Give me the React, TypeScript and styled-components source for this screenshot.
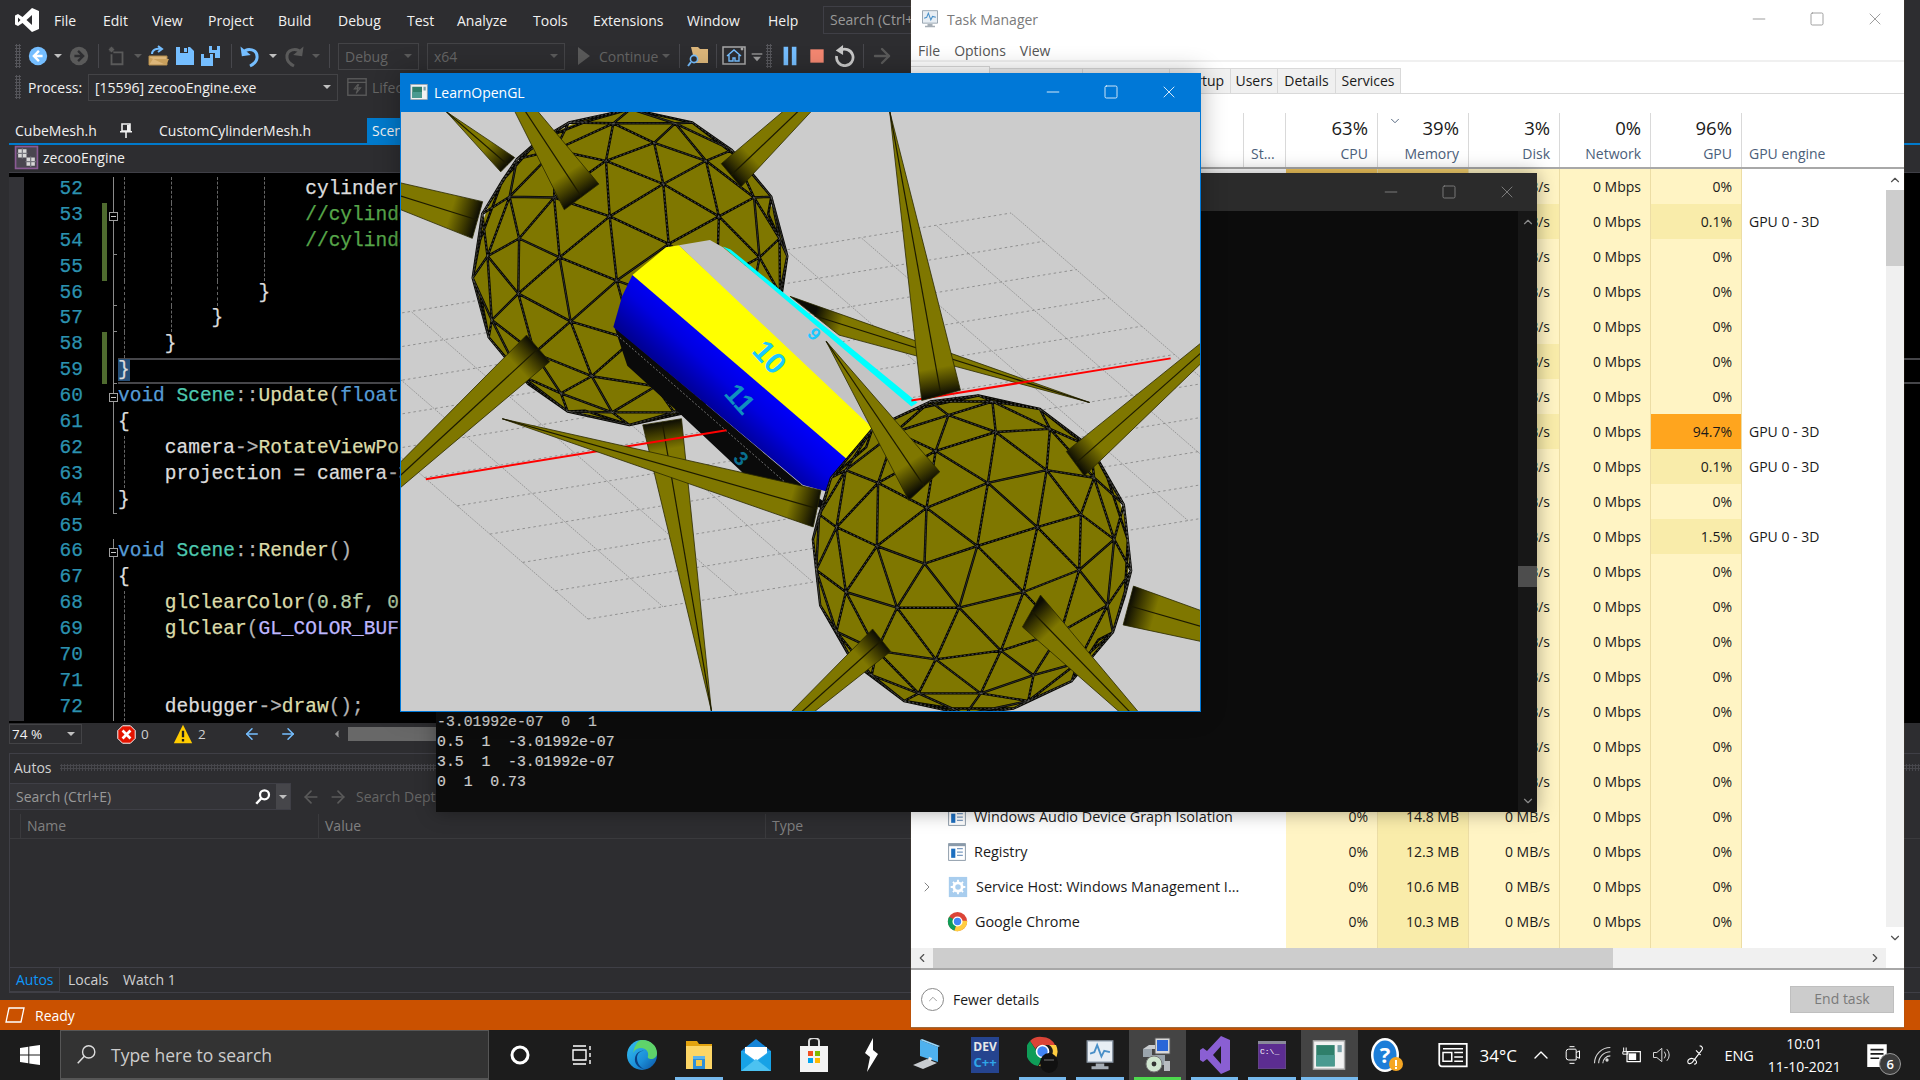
import React, { useId } from 'react'
import styled, { createGlobalStyle } from 'styled-components'
import { ChevronUp, ChevronDown, ChevronLeft, ChevronRight, ArrowLeft, ArrowRight, Minus, Square, X } from 'lucide-react'

const UI_FONT = '"Open Sans", "Noto Sans", sans-serif'
const CODE_FONT = '"Liberation Mono", "DejaVu Sans Mono", monospace'

const GlobalStyle = createGlobalStyle`
  html, body {
    margin: 0;
    padding: 0;
    background: #1c1c1c;
  }
  * {
    box-sizing: border-box;
  }
`

const Desktop = styled.div`
  width: 1920px;
  height: 1080px;
  display: flex;
  flex-direction: column;
  overflow: hidden;
  font-family: ${UI_FONT};
  font-size: 14px;
`

const WorkArea = styled.div`
  position: relative;
  height: 1030px;
  flex: none;
`

/* ---------- Visual Studio ---------- */

const VsWindow = styled.div`
  position: absolute;
  inset: 0;
  background: #2d2d30;
  color: #f1f1f1;
  display: flex;
  flex-direction: column;
  overflow: hidden;
`

const MenuBar = styled.div`
  height: 40px;
  flex: none;
  display: flex;
  align-items: center;
  padding-left: 15px;
`

const VsLogo = styled.svg`
  width: 24px;
  height: 24px;
  flex: none;
  margin-right: 15px;
`

const MenuItem = styled.span<{ $w: number }>`
  width: ${({ $w }) => $w}px;
  flex: none;
  color: #f1f1f1;
`

const QuickSearch = styled.div`
  flex: none;
  height: 28px;
  width: 200px;
  margin-left: 18px;
  border: 1px solid #3f3f46;
  padding: 3px 6px;
  color: #999999;
  white-space: nowrap;
`

const Toolbar = styled.div`
  height: 32px;
  flex: none;
  display: flex;
  align-items: center;
  padding-left: 15px;
`

const ProcessBar = styled(Toolbar)`
  height: 30px;
`

const Grip = styled.div`
  width: 6px;
  height: 24px;
  flex: none;
  background-image: radial-gradient(#55555a 1px, transparent 1.2px);
  background-size: 3px 3px;
`

const Slot = styled.div<{ $w: number }>`
  width: ${({ $w }) => $w}px;
  height: 100%;
  flex: none;
  display: flex;
  align-items: center;
  justify-content: center;
`

const ToolSep = styled(Slot)`
  &::before {
    content: '';
    width: 1px;
    height: 24px;
    background: #47474c;
  }
`

const Combo = styled.div<{ $w: number; $dim?: boolean }>`
  width: ${({ $w }) => $w}px;
  height: 27px;
  flex: none;
  display: flex;
  align-items: center;
  justify-content: space-between;
  padding: 0 6px;
  border: 1px solid #434346;
  color: ${({ $dim }) => ($dim ? '#656565' : '#f1f1f1')};
`

const Caret = styled.i<{ $dim?: boolean }>`
  width: 0;
  height: 0;
  flex: none;
  border-left: 4px solid transparent;
  border-right: 4px solid transparent;
  border-top: 4px solid ${({ $dim }) => ($dim ? '#5a5a5a' : '#c0c0c0')};
`

const DimText = styled.span`
  color: #656565;
  white-space: nowrap;
`

const ProcessLabel = styled.span`
  width: 60px;
  margin-left: 7px;
  flex: none;
  color: #f1f1f1;
`

const TabRow = styled.div`
  height: 41px;
  flex: none;
  display: flex;
  align-items: flex-end;
  padding-left: 15px;
`

const DocTab = styled.div<{ $w: number; $active?: boolean }>`
  width: ${({ $w }) => $w}px;
  height: 25px;
  flex: none;
  display: flex;
  align-items: center;
  gap: 22px;
  white-space: nowrap;
  ${({ $active }) => $active && 'background: #007acc; padding-left: 5px;'}
`

const ContentColumn = styled.div`
  flex: 1;
  min-height: 0;
  margin-left: 9px;
  display: flex;
  flex-direction: column;
  border-top: 2px solid #007acc;
`

const NavBar = styled.div`
  height: 28px;
  flex: none;
  display: flex;
  align-items: center;
  gap: 4px;
  padding: 0 0 2px 5px;
  border-bottom: 1px solid #3f3f46;
`

const Editor = styled.div`
  height: 550px;
  flex: none;
  padding-top: 4px;
  background: #000000;
  overflow: hidden;
  font-family: ${CODE_FONT};
  font-size: 19.5px;
  -webkit-text-stroke: 0.25px;
  display: flex;
  flex-direction: column;
`

const CodeRow = styled.div`
  position: relative;
  height: 25.9px;
  flex: none;
  display: flex;
  align-items: stretch;
`

const Strip = styled.div`
  width: 15px;
  flex: none;
  background: #333337;
`

const LineNumber = styled.div`
  width: 59px;
  flex: none;
  color: #2b91af;
  text-align: right;
  line-height: 25.9px;
`

const ChangeBar = styled.div<{ $on?: boolean }>`
  width: 5px;
  margin-left: 19px;
  flex: none;
  background: ${({ $on }) => ($on ? '#4f6b2f' : 'transparent')};
`

const FoldCell = styled.div<{ $kind: string }>`
  position: relative;
  width: 11px;
  flex: none;
  &::before {
    content: '';
    display: ${({ $kind }) => ($kind === 'none' ? 'none' : 'block')};
    position: absolute;
    left: 6px;
    top: 0;
    bottom: 0;
    width: 1px;
    background: #8a8a8a;
  }
  &::after {
    content: '';
    display: ${({ $kind }) => ($kind === 'end' ? 'block' : 'none')};
    position: absolute;
    left: 6px;
    bottom: 0;
    width: 4px;
    height: 1px;
    background: #8a8a8a;
  }
`

const FoldBox = styled.span`
  position: absolute;
  left: 2px;
  top: 9px;
  width: 9px;
  height: 9px;
  background: #000000;
  border: 1px solid #a0a0a0;
  &::after {
    content: '';
    position: absolute;
    left: 1px;
    right: 1px;
    top: 3px;
    height: 1px;
    background: #c8c8c8;
  }
`

const CodeText = styled.div<{ $current?: boolean }>`
  flex: 1;
  white-space: pre;
  line-height: 25.9px;
  overflow: hidden;
  ${({ $current }) => $current && 'box-shadow: inset 0 2px 0 #46464a, inset 0 -2px 0 #46464a;'}
`

const Token = styled.span<{ $c: string; $sel?: boolean }>`
  color: ${({ $c }) => $c};
  ${({ $sel }) => $sel && 'background: #264f78;'}
`

const Guide = styled.i`
  position: absolute;
  top: 0;
  bottom: 0;
  width: 0;
  border-left: 1px dashed #666666;
`

const EditorStatus = styled.div`
  height: 22px;
  flex: none;
  display: flex;
  align-items: center;
  font-size: 13.5px;
`

const ZoomCombo = styled(Combo)`
  height: 20px;
  padding: 0 6px 0 2px;
  width: 73px;
`

const StatusCount = styled.span`
  color: #d0d0d0;
  margin-left: 5px;
  width: 20px;
`

const HScrollThumb = styled.div`
  flex: none;
  width: 400px;
  height: 14px;
  background: #686868;
`

const AutosPanel = styled.div`
  height: 240px;
  margin-top: 8px;
  flex: none;
  border: 1px solid #3f3f46;
  border-right: none;
  display: flex;
  flex-direction: column;
`

const PanelTitle = styled.div`
  height: 29px;
  flex: none;
  display: flex;
  align-items: center;
  gap: 8px;
  padding: 0 0 2px 4px;
  color: #d0d0d0;
`

const GripBar = styled.div`
  flex: 1;
  height: 7px;
  background-image: radial-gradient(#47474c 1px, transparent 1.2px);
  background-size: 3px 3px;
`

const SearchRow = styled.div`
  height: 27px;
  flex: none;
  display: flex;
  align-items: center;
`

const WatchSearch = styled.div`
  width: 281px;
  height: 100%;
  flex: none;
  display: flex;
  align-items: center;
  background: #333337;
  color: #999999;
  padding-left: 6px;
  border: 1px solid #3f3f46;
  border-left: none;
`

const WatchSearchText = styled.span`
  flex: 1;
`

const DropZone = styled.div`
  width: 14px;
  align-self: stretch;
  flex: none;
  display: flex;
  align-items: center;
  justify-content: center;
  background: #46464a;
`

const ColumnHeader = styled.div`
  height: 25px;
  margin-top: 4px;
  flex: none;
  display: grid;
  grid-template-columns: 10px 298px 447px 1fr;
  color: #808080;
  border-bottom: 1px solid #3a3a3d;
`

const ColumnCell = styled.div`
  padding-left: 6px;
  border-left: 1px solid #3a3a3d;
  line-height: 24px;
`

const WatchArea = styled.div`
  flex: 1;
`

const BottomTabs = styled.div`
  height: 25px;
  flex: none;
  display: flex;
  align-items: stretch;
  border-top: 1px solid #3f3f46;
`

const BottomTab = styled.div<{ $w: number; $active?: boolean }>`
  width: ${({ $w }) => $w}px;
  flex: none;
  padding-left: ${({ $active }) => ($active ? '6px' : '7px')};
  line-height: 24px;
  color: ${({ $active }) => ($active ? '#0e97f8' : '#d0d0d0')};
  ${({ $active }) => $active && 'border-right: 1px solid #3f3f46; border-bottom: 1px solid #3f3f46; margin-right: 1px;'}
`

const VsStatusBar = styled.div`
  height: 30px;
  margin-top: 7px;
  flex: none;
  background: #ca5100;
  color: #ffffff;
  display: flex;
  align-items: center;
  gap: 10px;
  padding-left: 5px;
`

/* ---------- Task Manager ---------- */

const TaskManagerWindow = styled.div`
  position: absolute;
  left: 911px;
  top: 0;
  width: 993px;
  height: 1028px;
  background: #ffffff;
  color: #1a1a1a;
  display: flex;
  flex-direction: column;
  box-shadow: 0 0 1px #7a5a3a;
  border-bottom: 1px solid #a06a3a;
`

const TitleBar = styled.div`
  height: 40px;
  flex: none;
  display: flex;
  align-items: center;
  gap: 7px;
  padding: 0 0 2px 9px;
  color: #7a7a7a;
`

const TitleText = styled.span`
  flex: 1;
`

const CaptionButtons = styled.div<{ $color: string }>`
  display: flex;
  flex: none;
  align-items: center;
  color: ${({ $color }) => $color};
`

const CaptionButton = styled.div<{ $w: number }>`
  width: ${({ $w }) => $w}px;
  height: 30px;
  flex: none;
  display: flex;
  align-items: center;
  justify-content: center;
`

const TmMenu = styled.div`
  height: 22px;
  flex: none;
  display: flex;
  align-items: center;
  gap: 14px;
  padding-left: 7px;
  color: #555555;
  border-bottom: 2px solid #f0f0f0;
`

const TmTabs = styled.div`
  height: 32px;
  flex: none;
  display: flex;
  align-items: flex-end;
  border-bottom: 1px solid #d9d9d9;
`

const TmTab = styled.div<{ $w: number; $active?: boolean }>`
  width: ${({ $w }) => $w}px;
  height: ${({ $active }) => ($active ? '27px' : '25px')};
  flex: none;
  background: ${({ $active }) => ($active ? '#ffffff' : '#f0f0f0')};
  border: 1px solid #d9d9d9;
  border-left: none;
  border-bottom: none;
  text-align: center;
  line-height: 23px;
`

const HeaderRow = styled.div`
  height: 56px;
  margin-top: 19px;
  flex: none;
  display: grid;
  grid-template-columns: 333px 42px 92px 91px 91px 91px 91px 1fr;
  border-bottom: 2px solid #a8a8a8;
`

const HeaderCell = styled.div<{ $align?: string }>`
  position: relative;
  border-right: 1px solid #d9d9d9;
  display: flex;
  flex-direction: column;
  justify-content: flex-end;
  align-items: ${({ $align }) => $align || 'flex-end'};
  padding: 0 9px 4px 7px;
  color: #4c607a;
`

const LastHeaderCell = styled(HeaderCell)`
  border-right: none;
`

const BigPercent = styled.span`
  font-size: 18.5px;
  color: #1a1a1a;
  line-height: 28px;
  margin-bottom: 2px;
`

const SortMark = styled.span`
  position: absolute;
  left: 10px;
  top: 1px;
  color: #4c607a;
  display: flex;
`

const TableArea = styled.div`
  height: 779px;
  flex: none;
  display: flex;
`

const Rows = styled.div`
  flex: 1;
  overflow: hidden;
`

const ProcessRow = styled.div`
  height: 35px;
  display: grid;
  grid-template-columns: 333px 42px 92px 91px 91px 91px 91px 1fr;
`

const NameCell = styled.div`
  display: flex;
  align-items: center;
  padding-left: 8px;
  white-space: nowrap;
  overflow: hidden;
`

const Expander = styled.div`
  width: 16px;
  flex: none;
  color: #7a7a7a;
  display: flex;
  margin-right: 12px;
`

const ProcessName = styled.span`
  margin-left: 7px;
  font-size: 14.4px;
`

const EmptyCell = styled.div``

const HeatCell = styled.div<{ $bg: string }>`
  background: ${({ $bg }) => $bg};
  border-right: 1px solid #ecdda5;
  display: flex;
  align-items: center;
  justify-content: flex-end;
  padding-right: 9px;
  white-space: nowrap;
`

const EngineCell = styled.div`
  display: flex;
  align-items: center;
  padding-left: 7px;
`

const VScroll = styled.div`
  width: 18px;
  flex: none;
  background: #f0f0f0;
  display: flex;
  flex-direction: column;
  align-items: center;
  justify-content: space-between;
  position: relative;
  color: #505050;
`

const ArrowBox = styled.div`
  height: 21px;
  width: 100%;
  background: #ffffff;
  display: flex;
  align-items: center;
  justify-content: center;
  flex: none;
`

const VThumb = styled.div`
  position: absolute;
  left: 0;
  right: 0;
  top: 21px;
  height: 76px;
  background: #cdcdcd;
`

const HScroll = styled.div`
  height: 20px;
  flex: none;
  display: flex;
  align-items: center;
  background: #f0f0f0;
  margin-right: 18px;
  color: #505050;
`

const HThumb = styled.div`
  width: 680px;
  height: 100%;
  flex: none;
  background: #cdcdcd;
`

const HTrack = styled.div`
  flex: 1;
`

const TmFooter = styled.div`
  flex: 1;
  display: flex;
  align-items: center;
  justify-content: space-between;
  padding: 1px 10px 0 10px;
  border-top: 2px solid #a8a8a8;
`

const FewerDetails = styled.div`
  display: flex;
  align-items: center;
  gap: 9px;
`

const FewerCircle = styled.div`
  width: 23px;
  height: 23px;
  border: 1px solid #8a8a8a;
  border-radius: 50%;
  color: #8a8a8a;
  display: flex;
  align-items: center;
  justify-content: center;
`

const EndTask = styled.div`
  width: 104px;
  height: 27px;
  background: #cccccc;
  border: 1px solid #bfbfbf;
  color: #7a7a7a;
  text-align: center;
  line-height: 24px;
`

/* ---------- Console ---------- */

const ConsoleWindow = styled.div`
  position: absolute;
  left: 436px;
  top: 173px;
  width: 1101px;
  height: 639px;
  display: flex;
  flex-direction: column;
  background: #0c0c0c;
  box-shadow: 0 0 18px rgba(0, 0, 0, 0.35);
`

const ConsoleTitle = styled.div`
  height: 38px;
  flex: none;
  background: #2b2b2b;
  display: flex;
  justify-content: flex-end;
  align-items: center;
  padding-right: 1px;
`

const ConsoleBody = styled.div`
  flex: 1;
  display: flex;
  min-height: 0;
`

const ConsoleText = styled.pre`
  flex: 1;
  margin: 0;
  padding: 0 0 20px 1px;
  align-self: flex-end;
  font-family: ${CODE_FONT};
  font-size: 14.8px;
  -webkit-text-stroke: 0.2px;
  line-height: 20px;
  color: #cccccc;
`

const ConsoleScroll = styled.div`
  width: 19px;
  flex: none;
  background: #171717;
  position: relative;
  color: #8a8a8a;
  display: flex;
  flex-direction: column;
  align-items: center;
  justify-content: space-between;
  padding: 4px 0;
`

const ConsoleThumb = styled.div`
  position: absolute;
  left: 0;
  right: 0;
  top: 355px;
  height: 21px;
  background: #4d4d4d;
`

/* ---------- GL window ---------- */

const GlWindow = styled.div`
  position: absolute;
  left: 400px;
  top: 73px;
  width: 801px;
  height: 639px;
  display: flex;
  flex-direction: column;
  background: #0078d7;
  border: 1px solid #0078d7;
  box-shadow: 0 0 24px rgba(0, 0, 0, 0.3);
`

const GlTitle = styled.div`
  height: 38px;
  flex: none;
  display: flex;
  align-items: center;
  gap: 6px;
  padding: 0 2px 2px 9px;
  color: #ffffff;
`

const Scene = styled.svg`
  display: block;
  width: 799px;
  height: 599px;
  flex: none;
  background: #cccccc;
`

/* ---------- Taskbar ---------- */

const Taskbar = styled.div`
  height: 50px;
  flex: none;
  background: #1c1c1c;
  display: flex;
  align-items: stretch;
  color: #ffffff;
`

const StartButton = styled.div`
  width: 60px;
  flex: none;
  display: flex;
  align-items: center;
  justify-content: center;
`

const TaskSearch = styled.div`
  width: 429px;
  flex: none;
  background: #333333;
  border: 1px solid #565656;
  border-bottom-width: 2px;
  display: flex;
  align-items: center;
  gap: 14px;
  padding-left: 15px;
  color: #cccccc;
  font-size: 17.5px;
`

const TaskButton = styled.div<{ $w?: number; $hl?: boolean; $bar?: string }>`
  position: relative;
  width: ${({ $w }) => $w || 57.3}px;
  flex: none;
  display: flex;
  align-items: center;
  justify-content: center;
  background: ${({ $hl }) => ($hl ? '#444444' : 'transparent')};
  &::after {
    content: '';
    display: ${({ $bar }) => ($bar ? 'block' : 'none')};
    position: absolute;
    left: 5px;
    right: 5px;
    bottom: 0;
    height: 3px;
    background: ${({ $bar }) => $bar};
  }
`

const WideBar = styled(TaskButton)`
  &::after {
    left: 0;
    right: 0;
  }
`

const Tray = styled.div<{ $w: number }>`
  width: ${({ $w }) => $w}px;
  flex: none;
  display: flex;
  align-items: center;
  justify-content: center;
`

const WeatherText = styled(Tray)`
  font-size: 17px;
`

const LangText = styled(Tray)`
  font-size: 14.5px;
`

const Clock = styled.div`
  width: 86px;
  flex: none;
  display: flex;
  flex-direction: column;
  align-items: center;
  justify-content: center;
  gap: 3px;
  font-size: 14px;
  line-height: 20px;
`

const NotifyBadge = styled.span`
  position: absolute;
  right: 6px;
  bottom: 5px;
  width: 22px;
  height: 22px;
  border-radius: 50%;
  background: #3c3c3c;
  border: 1px solid #9a9a9a;
  color: #ffffff;
  font-size: 13px;
  font-weight: 600;
  line-height: 20px;
  text-align: center;
`

/* ---------- Small drawn icons ---------- */

const Ico = ({ s = 20, children }: { s?: number; children: React.ReactNode }) => (
  <svg width={s} height={s} viewBox="0 0 24 24" style={{ flex: 'none' }}>
    {children}
  </svg>
)

const BLUE = '#75beff'
const DIM = '#5a5a5a'

const CircleArrow = ({ dir, c }: { dir: 'l' | 'r'; c: string }) => (
  <Ico s={22}>
    <circle cx="12" cy="12" r="10" fill={c} />
    <path
      d={dir === 'l' ? 'M13 6.5 7.5 12l5.5 5.5M8 12h9' : 'M11 6.5 16.5 12 11 17.5M16 12H7'}
      stroke={dir === 'l' ? '#ffffff' : '#2d2d30'}
      strokeWidth="2.6"
      fill="none"
    />
  </Ico>
)

const SaveIcon = () => (
  <Ico s={24}>
    <path d="M3 3h14l4 4v14H3z" fill={BLUE} />
    <path d="M7 3h8v6H7z" fill="#2d2d30" />
    <path d="M11 4h3v4h-3z" fill={BLUE} />
  </Ico>
)

const SaveAllIcon = () => (
  <Ico s={24}>
    <path d="M10 2h11v12h-5V9h-6z" fill={BLUE} />
    <path d="M13 2h5v4h-5z" fill="#2d2d30" />
    <path d="M2 10h12v12H2z" fill={BLUE} />
    <path d="M5 10h6v4H5z" fill="#2d2d30" />
  </Ico>
)

const OpenIcon = () => (
  <Ico s={24}>
    <path d="M2 12h18v9H2z" fill="#dcb67a" stroke="#b08a4a" />
    <path d="M2 13v8l4-6h16l-3 6" fill="#c9a05c" />
    <path d="M5 10c0-4 4-6 9-5M11 2l4 3-4 3" stroke={BLUE} strokeWidth="2" fill="none" />
  </Ico>
)

const NewProjectIcon = () => (
  <Ico s={22}>
    <path d="M8 8h10v13H6V10" stroke={DIM} strokeWidth="2" fill="none" />
    <path d="M6 2v6M3 5h6M4 3l4 4M8 3 4 7" stroke={DIM} strokeWidth="1.4" />
  </Ico>
)

const UndoIcon = ({ c, flip }: { c: string; flip?: boolean }) => (
  <Ico s={24}>
    <g transform={flip ? 'translate(24 0) scale(-1 1)' : undefined}>
      <path d="M5 9c4-6 15-4 14 5-.5 4-3 6-7 8" stroke={c} strokeWidth="3" fill="none" />
      <path d="M3 2v10h9z" fill={c} transform="rotate(-8 6 6)" />
    </g>
  </Ico>
)

const LensFolder = () => (
  <Ico s={24}>
    <path d="M5 3h7l2 2h8v14H9z" fill="#dcb67a" />
    <circle cx="8" cy="15" r="3.6" fill="#2d2d30" stroke={BLUE} strokeWidth="1.6" />
    <path d="M5 18l-3 4" stroke={BLUE} strokeWidth="2" />
  </Ico>
)

const HomeFrame = () => (
  <Ico s={24}>
    <rect x="1" y="3" width="22" height="17" fill="#2d2d30" stroke="#a8a8a8" strokeWidth="1.5" />
    <path d="M5 12l7-6 7 6M7 11v6h4v-3h2v3h4v-6" stroke={BLUE} strokeWidth="1.4" fill="none" />
    <circle cx="20" cy="5" r="1.4" fill="#a8a8a8" />
  </Ico>
)

const SmallDrop = () => (
  <Ico s={16}>
    <path d="M4 9h16" stroke="#9a9a9a" strokeWidth="2" />
    <path d="M6 13h12l-6 7z" fill="#9a9a9a" />
  </Ico>
)

const PauseIcon = () => (
  <Ico s={22}>
    <path d="M5 2h5v20H5zM14 2h5v20h-5z" fill={BLUE} />
  </Ico>
)

const StopIcon = () => (
  <Ico s={16}>
    <path d="M2 2h20v20H2z" fill="#f48771" />
  </Ico>
)

const RestartIcon = () => (
  <Ico s={22}>
    <path d="M8 6a9 9 0 1 1-4 6" stroke="#c8c8c8" strokeWidth="3" fill="none" />
    <path d="M11 0v11L3 6z" fill="#c8c8c8" />
  </Ico>
)

const LifecycleIcon = () => (
  <Ico s={22}>
    <rect x="2" y="3" width="20" height="18" fill="none" stroke={DIM} strokeWidth="1.5" />
    <path d="M2 7h20M13 9l-4 5h4l-2 5 5-6h-4l2-4" stroke={DIM} strokeWidth="1.2" fill="none" />
  </Ico>
)

const ProjectIcon = () => (
  <Ico s={25}>
    <rect x="1.5" y="1.5" width="21" height="21" fill="#4a4650" stroke="#8a5a94" strokeWidth="1.6" />
    <path d="M4 4h8v8H4zM12 12h8v8h-8z" fill="#d8d8d8" />
    <path d="M8 3v10M3 8h10M16 11v10M11 16h10" stroke="#77777f" strokeWidth="1.2" />
  </Ico>
)

const DocPin = () => (
  <svg width="14" height="15" viewBox="0 0 14 15" style={{ flex: 'none' }}>
    <path d="M3 1h8v7H3z" fill="none" stroke="#f1f1f1" strokeWidth="1.6" />
    <path d="M8 2h3v6H8zM1 8h12v1.6H1z" fill="#f1f1f1" />
    <path d="M7 9v6" stroke="#f1f1f1" strokeWidth="1.6" />
  </svg>
)

const ErrorIcon = () => (
  <Ico s={19}>
    <path d="M7 1h10l6 6v10l-6 6H7l-6-6V7z" fill="#e51400" stroke="#ffffff" strokeWidth="1.2" />
    <path d="M7 7l10 10M17 7 7 17" stroke="#ffffff" strokeWidth="3.4" />
  </Ico>
)

const WarnIcon = () => (
  <Ico s={20}>
    <path d="M12 1 23 23H1z" fill="#ffcc00" />
    <path d="M12 8v8M12 18v3" stroke="#1e1e1e" strokeWidth="2.8" />
  </Ico>
)

const TmIcon = ({ s = 20 }: { s?: number }) => (
  <Ico s={s}>
    <path d="M3 2h18v15H3z" fill="#e8eef4" stroke="#8a97a5" />
    <path d="M5 11l3-1 2-5 3 8 2-4 4 1" stroke="#4a90c8" strokeWidth="1.3" fill="none" />
    <path d="M9 18h6v2h3v2H6v-2h3z" fill="#a5adb5" />
  </Ico>
)

const GlIcon = ({ s = 18 }: { s?: number }) => (
  <Ico s={s}>
    <rect x="1" y="2" width="22" height="20" fill="#f2f2f2" stroke="#a8a8a8" />
    <path d="M3 5h13v15H3z" fill="#2f7f6b" />
    <path d="M3 12h13v8H3z" fill="#4a9a90" />
    <path d="M18 5h3v5h-3z" fill="#79a0a8" />
  </Ico>
)

const ScreenSearch = () => (
  <Ico s={21}>
    <circle cx="14.5" cy="9" r="7" fill="none" stroke="#dddddd" strokeWidth="1.6" />
    <path d="M9.5 14 2 22" stroke="#dddddd" strokeWidth="1.8" />
  </Ico>
)

const Lens = () => (
  <Ico s={18}>
    <circle cx="14" cy="9" r="6" fill="none" stroke="#ffffff" strokeWidth="3" />
    <path d="M9.5 14 3 21" stroke="#ffffff" strokeWidth="3.4" />
  </Ico>
)

/* ---------- Taskbar icons ---------- */

const WinLogo = () => (
  <svg width="20" height="20" viewBox="0 0 20 20">
    <path d="M0 3l8.3-1.2V9.5H0zM9.3 1.6 20 0v9.5H9.3zM0 10.5h8.3v7.7L0 17zM9.3 10.5H20V20l-10.7-1.6z" fill="#ffffff" />
  </svg>
)

const TaskViewIcon = () => (
  <Ico s={24}>
    <path d="M3 7h13v10H3zM3 3h13M3 21h13M20 3v4M20 10v4M20 17v4" stroke="#ffffff" strokeWidth="1.4" fill="none" />
  </Ico>
)

const CortanaIcon = () => (
  <svg width="22" height="22" viewBox="0 0 22 22">
    <circle cx="11" cy="11" r="8" fill="none" stroke="#ffffff" strokeWidth="3" />
  </svg>
)

const EdgeIcon = () => {
  const id = useId()
  return (
    <svg width="32" height="32" viewBox="0 0 32 32">
      <defs>
        <linearGradient id={id} x1="0" y1="0" x2="1" y2="1">
          <stop offset="0" stopColor="#35c1f1" />
          <stop offset="0.6" stopColor="#1b8ed8" />
          <stop offset="1" stopColor="#0b4f9e" />
        </linearGradient>
      </defs>
      <circle cx="16" cy="16" r="15" fill={`url(#${id})`} />
      <path d="M16 1c9 0 15 6 15 13 0 4-3 6-6 6-2 0-4-1-3-3 1-4-2-8-7-8-4 0-7 2-8 6C8 8 11 1 16 1z" fill="#5fd36a" />
      <path d="M11 19c0-5 4-8 9-7-5-1-10 1-11 7-1 5 3 10 9 11-4-2-7-6-7-11z" fill="#0a3f82" />
    </svg>
  )
}

const ExplorerIcon = () => (
  <svg width="30" height="32" viewBox="0 0 30 32">
    <path d="M2 2h11l2 3h13v3H2z" fill="#e3a30f" />
    <path d="M2 7h26v23H2z" fill="#fdd666" />
    <path d="M9 17h12v13H9z" fill="#2e8fd8" />
    <path d="M12 21h6v6h-6z" fill="#f5c94b" />
    <path d="M9 17h12v3H9z" fill="#5db4ec" />
  </svg>
)

const MailIcon = () => (
  <svg width="30" height="32" viewBox="0 0 30 32">
    <path d="M0 12 15 0l15 12v20H0z" fill="#1484d8" />
    <path d="M0 12h30v20H0z" fill="#29a6ec" />
    <path d="M4 8h22v6l-11 8L4 14z" fill="#ffffff" />
    <path d="M0 12l15 12 15-12v20H0z" fill="#17a2e6" />
    <path d="M0 32 15 20l15 12z" fill="#4cc2f1" />
  </svg>
)

const StoreIcon = () => (
  <svg width="28" height="34" viewBox="0 0 28 34">
    <path d="M9 8V3a5 3 0 0 1 10 0v5" fill="none" stroke="#d8d8d8" strokeWidth="2" />
    <path d="M0 8h28v26H0z" fill="#f3f3f3" />
    <path d="M8 13h5v5H8z" fill="#f25022" />
    <path d="M15 13h5v5h-5z" fill="#7fba00" />
    <path d="M8 20h5v5H8z" fill="#00a4ef" />
    <path d="M15 20h5v5h-5z" fill="#ffb900" />
  </svg>
)

const BoltIcon = () => (
  <svg width="18" height="34" viewBox="0 0 18 34">
    <path d="M11 0 3 15l5 4-3 15 11-18-5-4z" fill="#ffffff" />
  </svg>
)

const PcIcon = () => (
  <svg width="34" height="34" viewBox="0 0 34 34">
    <path d="M9 2 27 9v15l-18-6z" fill="#4eb1ee" />
    <path d="M9 2l2-1 18 7-2 1z" fill="#9ad6f8" />
    <path d="M2 27l14-6 10 4-14 6z" fill="#c8ccd0" />
    <path d="M18 19l3 1-1 3-3-1z" fill="#e8e8e8" />
  </svg>
)

const DevIcon = () => (
  <svg width="28" height="36" viewBox="0 0 28 36">
    <rect x="0" y="0" width="28" height="36" fill="#25448f" />
    <text x="14" y="14" textAnchor="middle" fontSize="12" fontWeight="700" fill="#e8e8e8" fontFamily={UI_FONT}>DEV</text>
    <text x="14" y="30" textAnchor="middle" fontSize="13" fontWeight="700" fill="#2fa6e8" fontFamily={UI_FONT}>C++</text>
  </svg>
)

const ChromeIcon = () => (
  <svg width="32" height="38" viewBox="0 0 32 38">
    <path d="M15 1a14.5 14.5 0 0 1 13 8H15a7 7 0 0 0-6.5 4L3 5a14.5 14.5 0 0 1 12-4z" fill="#db4437" />
    <path d="M3 5l6 9a7 7 0 0 0 6 8l-4 8A15 15 0 0 1 3 5z" fill="#0f9d58" />
    <path d="M29 9a15 15 0 0 1-17 21l5-8a7 7 0 0 0 5-13z" fill="#ffcd40" />
    <circle cx="15.5" cy="15.5" r="6" fill="#4285f4" stroke="#ffffff" strokeWidth="1.6" />
    <ellipse cx="22" cy="27" rx="9" ry="10" fill="#111111" />
    <path d="M17 24h10" stroke="#777" strokeWidth="1" />
  </svg>
)

const InstallerIcon = () => (
  <svg width="34" height="36" viewBox="0 0 34 36">
    <path d="M15 1h15v16H15z" fill="#d8d8d8" stroke="#555" />
    <path d="M17 3h11v11H17z" fill="#2a66d8" />
    <path d="M3 12h9v8H3zM9 18h16v10H9z" fill="#9aa4ac" />
    <path d="M3 12l6-4h6v4z" fill="#c8ccd0" />
    <circle cx="14" cy="27" r="8" fill="#d0e6d0" stroke="#777" />
    <circle cx="14" cy="27" r="2.4" fill="#333" />
    <path d="M24 24h6v10h-6z" fill="#b8bcc0" />
  </svg>
)

const VsTaskIcon = () => (
  <svg width="30" height="38" viewBox="0 0 30 38">
    <path d="M21 0l9 4v30l-9 4L7 23l-4 3-3-2V14l3-2 4 3zM21 10l-8 9 8 9z" fill="#8a5fd3" fillRule="evenodd" />
  </svg>
)

const ConsoleIcon = () => (
  <svg width="28" height="28" viewBox="0 0 28 28">
    <rect x="0" y="0" width="28" height="28" fill="#5c2d91" stroke="#777" strokeWidth="0.6" />
    <rect x="0" y="0" width="28" height="3" fill="#8a8a9a" />
    <text x="2" y="13" fontSize="8" fill="#ffffff" fontFamily={CODE_FONT}>C:\_</text>
  </svg>
)

const HelpIcon = () => (
  <svg width="32" height="36" viewBox="0 0 32 36">
    <ellipse cx="14" cy="18" rx="14" ry="17" fill="#ffffff" />
    <ellipse cx="14" cy="18" rx="11.5" ry="14.5" fill="#1d7ed8" />
    <text x="14" y="26" textAnchor="middle" fontSize="22" fontWeight="700" fill="#ffffff" fontFamily={UI_FONT}>?</text>
    <circle cx="25" cy="27" r="7" fill="#f5a623" />
    <path d="M25 23v6M25 30v2" stroke="#ffffff" strokeWidth="2" />
  </svg>
)

const NewsIcon = () => (
  <Ico s={30}>
    <path d="M1 3h22v18H3a2 2 0 0 1-2-2z" fill="none" stroke="#ffffff" strokeWidth="1.4" />
    <path d="M4 7h16M4 10h7v7H4zM13 10h7M13 13.5h7M13 17h7" stroke="#ffffff" strokeWidth="1.2" fill="none" />
  </Ico>
)

const MeetIcon = () => (
  <Ico s={20}>
    <path d="M8 5h8a1 1 0 0 1 1 1v12H8a3 3 0 0 1-3-3V8a3 3 0 0 1 3-3zM17 9l4-2v9l-4-2M9 2h6M9 22h6" stroke="#ffffff" strokeWidth="1.2" fill="none" />
  </Ico>
)

const WifiIcon = () => (
  <Ico s={20}>
    <path d="M3 22A19 19 0 0 1 22 3M8 22A14 14 0 0 1 22 8M13 22a9 9 0 0 1 9-9" stroke="#d8d8d8" strokeWidth="1.3" fill="none" />
    <circle cx="18" cy="18" r="2" fill="#d8d8d8" />
  </Ico>
)

const BatteryIcon = () => (
  <Ico s={20}>
    <path d="M6 8h16v12H6z" fill="none" stroke="#ffffff" strokeWidth="1.4" />
    <path d="M8 10h9v8H8z" fill="#ffffff" />
    <path d="M2 3v5M5 3v5M1 8h6v3H1z" stroke="#ffffff" strokeWidth="1.2" fill="none" />
  </Ico>
)

const VolumeIcon = () => (
  <Ico s={20}>
    <path d="M3 9h4l6-5v16l-6-5H3zM16 8a6 6 0 0 1 0 8M19 5a10 10 0 0 1 0 14" stroke="#d8d8d8" strokeWidth="1.2" fill="none" />
  </Ico>
)

const PenIcon = () => (
  <Ico s={22}>
    <path d="M16 2c3 0 4 3 2 5L8 20c-2 2-5 2-5-1 0-2 3-4 6-3 4 1 5 6 1 6M12 7l5 5" stroke="#ffffff" strokeWidth="1.2" fill="none" />
  </Ico>
)

const NotifyIcon = () => (
  <Ico s={26}>
    <path d="M3 2h18v16l-5 5H3z" fill="#ffffff" />
    <path d="M6 7h12M6 11h12M6 15h8" stroke="#1c1c1c" strokeWidth="1.6" />
  </Ico>
)

/* ---------- OpenGL scene ---------- */

// points read off the reference, in a 1.936 x 2.45 scaled frame of the window
const z = (x: number, y: number): [number, number] => [x / 1.936 - 1, y / 2.45 - 32]
type P = [number, number]
const pts = (list: P[]) =>
  list
    .map(([x, y]) => z(x, y))
    .map(p => p.join(','))
    .join(' ')

const ICO_V: number[][] = (() => {
  const t = (1 + Math.sqrt(5)) / 2
  return [
    [-1, t, 0], [1, t, 0], [-1, -t, 0], [1, -t, 0],
    [0, -1, t], [0, 1, t], [0, -1, -t], [0, 1, -t],
    [t, 0, -1], [t, 0, 1], [-t, 0, -1], [-t, 0, 1]
  ]
})()
const ICO_F = [
  [0, 11, 5], [0, 5, 1], [0, 1, 7], [0, 7, 10], [0, 10, 11],
  [1, 5, 9], [5, 11, 4], [11, 10, 2], [10, 7, 6], [7, 1, 8],
  [3, 9, 4], [3, 4, 2], [3, 2, 6], [3, 6, 8], [3, 8, 9],
  [4, 9, 5], [2, 4, 11], [6, 2, 10], [8, 6, 7], [9, 8, 1]
]

function spherePath(cx: number, cy: number, r: number, rx: number, ry: number, freq: number) {
  const rot = (v: number[]) => {
    const [x0, y0, z0] = v
    const y1 = y0 * Math.cos(rx) - z0 * Math.sin(rx)
    const z1 = y0 * Math.sin(rx) + z0 * Math.cos(rx)
    const x2 = x0 * Math.cos(ry) + z1 * Math.sin(ry)
    const z2 = -x0 * Math.sin(ry) + z1 * Math.cos(ry)
    return [x2, y1, z2]
  }
  const norm = (v: number[]) => {
    const l = Math.hypot(v[0], v[1], v[2])
    return [v[0] / l, v[1] / l, v[2] / l]
  }
  let d = ''
  ICO_F.forEach(([a, b, c]) => {
    const [A, B, C] = [ICO_V[a], ICO_V[b], ICO_V[c]]
    const at = (i: number, j: number) => {
      const k = freq - i - j
      return rot(norm([0, 1, 2].map(n => (A[n] * k + B[n] * i + C[n] * j) / freq)))
    }
    const tri = (p: number[][]) => {
      if (p[0][2] + p[1][2] + p[2][2] < -0.4) return
      d += 'M' + p.map(q => `${(cx + q[0] * r).toFixed(1)} ${(cy + q[1] * r).toFixed(1)}`).join('L') + 'Z'
    }
    for (let i = 0; i < freq; i++) {
      for (let j = 0; j < freq - i; j++) {
        tri([at(i, j), at(i + 1, j), at(i, j + 1)])
        if (i + j < freq - 1) tri([at(i + 1, j), at(i + 1, j + 1), at(i, j + 1)])
      }
    }
  })
  return d
}

const OLIVE = '#7f7700'

const Ball = ({ cx, cy, r, rx, ry }: { cx: number; cy: number; r: number; rx: number; ry: number }) => {
  const d = spherePath(cx, cy, r, rx, ry, 3)
  return (
    <g>
      <circle cx={cx} cy={cy} r={r - 4} fill={OLIVE} />
      <path d={d} fill={OLIVE} stroke="#050500" strokeWidth="2.4" strokeLinejoin="round" />
      <path d={d} fill="none" stroke="#777777" strokeWidth="0.35" strokeDasharray="2 2" />
    </g>
  )
}

const Spike = ({ a, b, tip }: { a: P; b: P; tip: P }) => {
  const id = useId()
  const [ax, ay] = z(a[0], a[1])
  const [bx, by] = z(b[0], b[1])
  const [tx, ty] = z(tip[0], tip[1])
  const mx = (ax + bx) / 2
  const my = (ay + by) / 2
  const len = Math.hypot(tx - mx, ty - my)
  const ex = mx + ((tx - mx) / len) * 28
  const ey = my + ((ty - my) / len) * 28
  return (
    <g>
      <defs>
        <linearGradient id={id} gradientUnits="userSpaceOnUse" x1={mx} y1={my} x2={ex} y2={ey}>
          <stop offset="0" stopColor="#0c0c04" />
          <stop offset="0.4" stopColor="#3c3800" />
          <stop offset="1" stopColor={OLIVE} />
        </linearGradient>
      </defs>
      <polygon points={`${ax},${ay} ${bx},${by} ${tx},${ty}`} fill={`url(#${id})`} stroke="#2a2800" strokeWidth="0.8" />
      <line x1={mx} y1={my} x2={tx} y2={ty} stroke="#1c1a00" strokeWidth="1.2" />
    </g>
  )
}

const GROUND_C: P = [187, 507]
const GROUND_U: P = [75, -12.3]
const GROUND_V: P = [-32.7, -28.3]

const Ground = () => {
  const at = (a: number, b: number) => [
    GROUND_C[0] + a * GROUND_U[0] + b * GROUND_V[0],
    GROUND_C[1] + a * GROUND_U[1] + b * GROUND_V[1]
  ]
  const steps = Array.from({ length: 11 }, (_, i) => i)
  return (
    <g>
      {steps.map(i => {
        const [x1, y1] = at(i, 0)
        const [x2, y2] = at(i, 10)
        return <line key={`a${i}`} x1={x1} y1={y1} x2={x2} y2={y2} stroke="#808080" strokeWidth="0.7" strokeDasharray="1.5 1" />
      })}
      {steps.map(i => {
        const [x1, y1] = at(0, i)
        const [x2, y2] = at(10, i)
        return <line key={`b${i}`} x1={x1} y1={y1} x2={x2} y2={y2} stroke="#808080" strokeWidth="0.8" strokeDasharray="2.5 3" />
      })}
    </g>
  )
}

const FaceNumber = ({ at, size, color, children }: { at: P; size: number; color: string; children: string }) => {
  const [x, y] = z(at[0], at[1])
  return (
    <text
      transform={`translate(${x} ${y}) rotate(48)`}
      textAnchor="middle"
      dominantBaseline="middle"
      fontSize={size}
      fontFamily="'Liberation Sans', sans-serif"
      fontWeight="700"
      fill={color}
    >
      {children}
    </text>
  )
}

const Red = ({ from, to }: { from: P; to: P }) => {
  const [x1, y1] = z(from[0], from[1])
  const [x2, y2] = z(to[0], to[1])
  return <line x1={x1} y1={y1} x2={x2} y2={y2} stroke="#ff0000" strokeWidth="2" />
}

const GlScene = () => {
  const blueId = useId()
  const [b1x, b1y] = z(640, 660)
  const [b2x, b2y] = z(560, 770)
  const [dl1x, dl1y] = z(420, 625)
  const [dl2x, dl2y] = z(745, 985)
  return (
    <Scene viewBox="0 0 799 599">
      <defs>
        <linearGradient id={blueId} gradientUnits="userSpaceOnUse" x1={b1x} y1={b1y} x2={b2x} y2={b2y}>
          <stop offset="0" stopColor="#0000ff" />
          <stop offset="0.45" stopColor="#0000e0" />
          <stop offset="1" stopColor="#000090" />
        </linearGradient>
      </defs>
      <Ground />
      <Spike a={[755, 530]} b={[850, 625]} tip={[1335, 790]} />
      <Spike a={[470, 845]} b={[545, 830]} tip={[603, 1546]} />
      <Spike a={[195, 225]} b={[222, 190]} tip={[90, 78]} />
      <Ball cx={229} cy={155} r={158} rx={0.35} ry={0.25} />
      <Spike a={[318, 318]} b={[385, 255]} tip={[155, -92]} />
      <Spike a={[622, 205]} b={[660, 262]} tip={[1000, -200]} />
      <Spike a={[160, 298]} b={[140, 388]} tip={[-300, 165]} />
      <Spike a={[245, 625]} b={[290, 690]} tip={[-300, 1320]} />

      <polygon points={pts([[415, 605], [790, 1005], [850, 1060], [700, 1010], [660, 958], [540, 815], [440, 700]])} fill="#0a0a0a" />
      <line x1={dl1x} y1={dl1y} x2={dl2x} y2={dl2y} stroke="#b8b8b8" strokeWidth="0.6" strokeDasharray="2 2" />
      <polygon points={pts([[450, 478], [900, 925], [860, 1020], [780, 992], [413, 605], [430, 530]])} fill={`url(#${blueId})`} />
      <polygon points={pts([[450, 478], [515, 410], [540, 405], [930, 860], [880, 945]])} fill="#ffff00" />
      <polygon points={pts([[540, 405], [600, 392], [625, 410], [1000, 795], [925, 865]])} fill="#c4c4c4" />
      <polygon points={pts([[625, 408], [640, 415], [1002, 790], [990, 800]])} fill="#00ffff" />
      <FaceNumber at={[712, 683]} size={30} color="#19c8ff">10</FaceNumber>
      <FaceNumber at={[655, 785]} size={28} color="#0f90bf">11</FaceNumber>
      <FaceNumber at={[800, 625]} size={18} color="#19c8ff">9</FaceNumber>
      <FaceNumber at={[658, 930]} size={20} color="#0a6f90">3</FaceNumber>

      <Red from={[50, 978]} to={[632, 858]} />
      <Red from={[990, 785]} to={[1492, 682]} />

      <Spike a={[1010, 785]} b={[1085, 760]} tip={[948, 76]} />
      <Spike a={[815, 1005]} b={[800, 1095]} tip={[198, 830]} />
      <Spike a={[1420, 1240]} b={[1400, 1335]} tip={[1950, 1483]} />
      <Ball cx={571} cy={443} r={161} rx={0.5} ry={-0.3} />
      <Spike a={[985, 1030]} b={[1045, 960]} tip={[825, 640]} />
      <Spike a={[1290, 910]} b={[1325, 970]} tip={[1800, 390]} />
      <Spike a={[1205, 1340]} b={[1240, 1262]} tip={[1530, 1700]} />
      <Spike a={[915, 1345]} b={[950, 1400]} tip={[600, 1750]} />
    </Scene>
  )
}

/* ---------- Data ---------- */

const COL = {
  plain: '#dcdcdc',
  kw: '#569cd6',
  type: '#4ec9b0',
  fn: '#dcdcaa',
  com: '#57a64a',
  num: '#b5cea8',
  mac: '#beb7ff',
  punc: '#b4b4b4'
}

type Tok = [string, string]
interface Line {
  n: number
  fold: string
  change?: boolean
  guides: number
  toks: Tok[]
  current?: boolean
}

const LINES: Line[] = [
  { n: 52, fold: 'line', guides: 4, toks: [['                cylinder->Draw();', COL.plain]] },
  { n: 53, fold: 'box', change: true, guides: 4, toks: [['                //cylinder->Update();', COL.com]] },
  { n: 54, fold: 'end', change: true, guides: 4, toks: [['                //cylinder->Render();', COL.com]] },
  { n: 55, fold: 'line', change: true, guides: 4, toks: [] },
  { n: 56, fold: 'end', guides: 3, toks: [['            }', COL.plain]] },
  { n: 57, fold: 'end', guides: 2, toks: [['        }', COL.plain]] },
  { n: 58, fold: 'line', change: true, guides: 1, toks: [['    }', COL.plain]] },
  { n: 59, fold: 'end', change: true, guides: 0, current: true, toks: [['}', COL.plain]] },
  {
    n: 60,
    fold: 'box',
    guides: 0,
    toks: [['void', COL.kw], [' ', COL.plain], ['Scene', COL.type], ['::', COL.punc], ['Update', COL.fn], ['(', COL.punc], ['float', COL.kw], [' delta)', COL.plain]]
  },
  { n: 61, fold: 'line', guides: 0, toks: [['{', COL.plain]] },
  { n: 62, fold: 'line', guides: 1, toks: [['    camera', COL.plain], ['->', COL.punc], ['RotateViewPoint', COL.fn], ['(delta);', COL.plain]] },
  { n: 63, fold: 'line', guides: 1, toks: [['    projection = camera', COL.plain], ['->', COL.punc], ['GetProjection', COL.fn], ['();', COL.plain]] },
  { n: 64, fold: 'end', guides: 0, toks: [['}', COL.plain]] },
  { n: 65, fold: 'none', guides: 0, toks: [] },
  { n: 66, fold: 'box', guides: 0, toks: [['void', COL.kw], [' ', COL.plain], ['Scene', COL.type], ['::', COL.punc], ['Render', COL.fn], ['()', COL.punc]] },
  { n: 67, fold: 'line', guides: 0, toks: [['{', COL.plain]] },
  { n: 68, fold: 'line', guides: 1, toks: [['    ', COL.plain], ['glClearColor', COL.fn], ['(', COL.punc], ['0.8f', COL.num], [', ', COL.punc], ['0.8f', COL.num], [');', COL.punc]] },
  { n: 69, fold: 'line', guides: 1, toks: [['    ', COL.plain], ['glClear', COL.fn], ['(', COL.punc], ['GL_COLOR_BUFFER_BIT', COL.mac], [');', COL.punc]] },
  { n: 70, fold: 'line', guides: 1, toks: [] },
  { n: 71, fold: 'line', guides: 1, toks: [] },
  { n: 72, fold: 'line', guides: 1, toks: [['    debugger', COL.plain], ['->', COL.punc], ['draw', COL.fn], ['();', COL.punc]] }
]

const HEAT = '#fff4c4'
const HEAT_MID = '#f9ecaa'
const HEAT_HOT = '#ffa51e'

interface ProcRow {
  name?: string
  icon?: 'frame' | 'gear' | 'chrome'
  expand?: boolean
  cpu?: string
  mem?: string
  gpu: string
  engine?: string
  cpuBg?: string
  memBg?: string
  diskBg?: string
  gpuBg?: string
}

const PROCS: ProcRow[] = [
  { gpu: '0%', cpuBg: '#efc35b', memBg: '#f3ce6b' },
  { gpu: '0.1%', engine: 'GPU 0 - 3D', diskBg: HEAT_MID, gpuBg: HEAT_MID },
  { gpu: '0%' },
  { gpu: '0%' },
  { gpu: '0%' },
  { gpu: '0%', diskBg: HEAT_MID },
  { gpu: '0%' },
  { gpu: '94.7%', engine: 'GPU 0 - 3D', diskBg: HEAT_MID, gpuBg: HEAT_HOT },
  { gpu: '0.1%', engine: 'GPU 0 - 3D', gpuBg: HEAT_MID },
  { gpu: '0%' },
  { gpu: '1.5%', engine: 'GPU 0 - 3D', gpuBg: HEAT_MID },
  { gpu: '0%' },
  { gpu: '0%' },
  { gpu: '0%' },
  { gpu: '0%' },
  { gpu: '0%' },
  { gpu: '0%' },
  { gpu: '0%' },
  { name: 'Windows Audio Device Graph Isolation', icon: 'frame', cpu: '0%', mem: '14.8 MB', gpu: '0%', memBg: HEAT_MID },
  { name: 'Registry', icon: 'frame', cpu: '0%', mem: '12.3 MB', gpu: '0%', memBg: HEAT_MID },
  { name: 'Service Host: Windows Management I...', icon: 'gear', expand: true, cpu: '0%', mem: '10.6 MB', gpu: '0%', memBg: HEAT_MID },
  { name: 'Google Chrome', icon: 'chrome', cpu: '0%', mem: '10.3 MB', gpu: '0%', memBg: HEAT_MID },
  { gpu: '', memBg: HEAT_MID }
]

const ProcIcon = ({ kind }: { kind: ProcRow['icon'] }) => {
  if (kind === 'frame') {
    return (
      <Ico s={20}>
        <rect x="2" y="2" width="20" height="20" fill="#ffffff" stroke="#7a8a9a" />
        <path d="M2 2h20v3H2z" fill="#8a9aaa" />
        <path d="M5 8h5v11H5z" fill="#1d6fc0" />
        <path d="M12 8h7M12 12h7M12 16h7" stroke="#7a9ac0" strokeWidth="1.5" />
      </Ico>
    )
  }
  if (kind === 'gear') {
    return (
      <Ico s={22}>
        <rect x="2" y="1" width="20" height="22" fill="#a8cdee" />
        <circle cx="12" cy="12" r="4.5" fill="none" stroke="#ffffff" strokeWidth="3" />
        <path d="M12 4v3M12 17v3M4 12h3M17 12h3M6.5 6.5l2 2M15.5 15.5l2 2M6.5 17.5l2-2M15.5 8.5l2-2" stroke="#ffffff" strokeWidth="2" />
      </Ico>
    )
  }
  return (
    <Ico s={21}>
      <circle cx="12" cy="12" r="11" fill="#db4437" />
      <path d="M12 12 2.5 6.5a11 11 0 0 0 6 16z" fill="#0f9d58" />
      <path d="M12 12 8.5 22.5A11 11 0 0 0 23 11H12z" fill="#ffcd40" />
      <circle cx="12" cy="12" r="5" fill="#4285f4" stroke="#ffffff" strokeWidth="1.6" />
    </Ico>
  )
}

const MENU: [string, number][] = [
  ['File', 49], ['Edit', 49], ['View', 56], ['Project', 70], ['Build', 60], ['Debug', 69],
  ['Test', 50], ['Analyze', 76], ['Tools', 60], ['Extensions', 94], ['Window', 81], ['Help', 37]
]

const HEAD_COLS: [string, string][] = [
  ['63%', 'CPU'], ['39%', 'Memory'], ['3%', 'Disk'], ['0%', 'Network'], ['96%', 'GPU']
]

const TM_TABS: [string, number, boolean?][] = [
  ['Processes', 79, true], ['Performance', 93], ['App history', 87], ['Startup', 61], ['Users', 47], ['Details', 58], ['Services', 65]
]

const Caption = ({ color, size = 20 }: { color: string; size?: number }) => (
  <CaptionButtons $color={color}>
    <CaptionButton $w={58}><Minus size={size} strokeWidth={1} /></CaptionButton>
    <CaptionButton $w={58}><Square size={size - 4} strokeWidth={1.2} /></CaptionButton>
    <CaptionButton $w={58}><X size={size} strokeWidth={1} /></CaptionButton>
  </CaptionButtons>
)

function VisualStudio() {
  return (
    <VsWindow>
      <MenuBar>
        <VsLogo viewBox="0 0 24 24">
          <path d="M17 0l7 3v18l-7 3-9.5-9L3 18l-3-1.5v-9L3 6l4.5 3zM17 7l-5.5 5 5.5 5zM3 9.5v5L5.5 12z" fill="#ffffff" fillRule="evenodd" />
        </VsLogo>
        {MENU.map(([label, w]) => (
          <MenuItem key={label} $w={w}>{label}</MenuItem>
        ))}
        <QuickSearch>Search (Ctrl+Q)</QuickSearch>
      </MenuBar>

      <Toolbar>
        <Grip />
        <Slot $w={5} />
        <Slot $w={24}><CircleArrow dir="l" c={BLUE} /></Slot>
        <Slot $w={16}><Caret /></Slot>
        <Slot $w={26}><CircleArrow dir="r" c={DIM} /></Slot>
        <ToolSep $w={12} />
        <Slot $w={26}><NewProjectIcon /></Slot>
        <Slot $w={16}><Caret $dim /></Slot>
        <Slot $w={26}><OpenIcon /></Slot>
        <Slot $w={26}><SaveIcon /></Slot>
        <Slot $w={26}><SaveAllIcon /></Slot>
        <ToolSep $w={14} />
        <Slot $w={24}><UndoIcon c={BLUE} /></Slot>
        <Slot $w={22}><Caret /></Slot>
        <Slot $w={20}><UndoIcon c={DIM} flip /></Slot>
        <Slot $w={24}><Caret $dim /></Slot>
        <ToolSep $w={2} />
        <Slot $w={8} />
        <Combo $w={81} $dim>Debug<Caret $dim /></Combo>
        <Slot $w={8} />
        <Combo $w={138} $dim>x64<Caret $dim /></Combo>
        <Slot $w={9} />
        <Slot $w={20}>
          <svg width="14" height="18" viewBox="0 0 14 18"><path d="M1 0l12 9-12 9z" fill={DIM} /></svg>
        </Slot>
        <Slot $w={5} />
        <DimText>Continue</DimText>
        <Slot $w={16}><Caret $dim /></Slot>
        <ToolSep $w={10} />
        <Slot $w={28}><LensFolder /></Slot>
        <ToolSep $w={8} />
        <Slot $w={28}><HomeFrame /></Slot>
        <Slot $w={18}><SmallDrop /></Slot>
        <Grip />
        <Slot $w={6} />
        <Slot $w={24}><PauseIcon /></Slot>
        <Slot $w={2} />
        <Slot $w={26}><StopIcon /></Slot>
        <Slot $w={28}><RestartIcon /></Slot>
        <ToolSep $w={10} />
        <Slot $w={28}><ArrowRight size={24} color={DIM} strokeWidth={2.4} /></Slot>
      </Toolbar>

      <ProcessBar>
        <Grip />
        <ProcessLabel>Process:</ProcessLabel>
        <Combo $w={250}>[15596] zecooEngine.exe<Caret /></Combo>
        <Slot $w={8} />
        <Slot $w={22}><LifecycleIcon /></Slot>
        <Slot $w={4} />
        <DimText>Lifecycle Events</DimText>
      </ProcessBar>

      <TabRow>
        <DocTab $w={144}>
          CubeMesh.h
          <DocPin />
        </DocTab>
        <DocTab $w={208}>CustomCylinderMesh.h</DocTab>
        <DocTab $w={120} $active>Scene.cpp</DocTab>
      </TabRow>

      <ContentColumn>
        <NavBar>
          <ProjectIcon />
          zecooEngine
        </NavBar>
        <Editor>
          {LINES.map(line => (
            <CodeRow key={line.n}>
              <Strip />
              <LineNumber>{line.n}</LineNumber>
              <ChangeBar $on={line.change} />
              <FoldCell $kind={line.fold}>{line.fold === 'box' && <FoldBox />}</FoldCell>
              <CodeText $current={line.current}>
                {line.toks.map(([text, color], i) => (
                  <Token key={i} $c={color} $sel={line.current}>{text}</Token>
                ))}
              </CodeText>
              {Array.from({ length: line.guides }, (_, i) => (
                <Guide key={i} style={{ left: 115 + i * 46.7 }} />
              ))}
            </CodeRow>
          ))}
        </Editor>
        <EditorStatus>
          <ZoomCombo $w={73}>74 %<Caret /></ZoomCombo>
          <Slot $w={35} />
          <ErrorIcon />
          <StatusCount>0</StatusCount>
          <Slot $w={12} />
          <WarnIcon />
          <StatusCount>2</StatusCount>
          <Slot $w={25} />
          <ArrowLeft size={18} color={BLUE} />
          <Slot $w={18} />
          <ArrowRight size={18} color={BLUE} />
          <Slot $w={34} />
          <ChevronLeft size={12} color="#9a9a9a" fill="#9a9a9a" />
          <Slot $w={5} />
          <HScrollThumb />
        </EditorStatus>
        <AutosPanel>
          <PanelTitle>
            Autos
            <GripBar />
          </PanelTitle>
          <SearchRow>
            <WatchSearch>
              <WatchSearchText>Search (Ctrl+E)</WatchSearchText>
              <Lens />
              <Slot $w={4} />
              <DropZone><Caret /></DropZone>
            </WatchSearch>
            <Slot $w={10} />
            <ArrowLeft size={20} color={DIM} />
            <Slot $w={7} />
            <ArrowRight size={20} color={DIM} />
            <Slot $w={8} />
            <DimText>Search Depth:</DimText>
          </SearchRow>
          <ColumnHeader>
            <div />
            <ColumnCell>Name</ColumnCell>
            <ColumnCell>Value</ColumnCell>
            <ColumnCell>Type</ColumnCell>
          </ColumnHeader>
          <WatchArea />
          <BottomTabs>
            <BottomTab $w={50} $active>Autos</BottomTab>
            <BottomTab $w={55}>Locals</BottomTab>
            <BottomTab $w={70}>Watch 1</BottomTab>
          </BottomTabs>
        </AutosPanel>
      </ContentColumn>
      <VsStatusBar>
        <svg width="20" height="16" viewBox="0 0 20 16">
          <path d="M4 1h15l-3 14H1z" fill="none" stroke="#ffffff" strokeWidth="1.3" />
        </svg>
        Ready
      </VsStatusBar>
    </VsWindow>
  )
}

function TaskManager() {
  return (
    <TaskManagerWindow>
      <TitleBar>
        <TmIcon />
        <TitleText>Task Manager</TitleText>
        <Caption color="#8a8a8a" />
      </TitleBar>
      <TmMenu>
        <span>File</span>
        <span>Options</span>
        <span>View</span>
      </TmMenu>
      <TmTabs>
        {TM_TABS.map(([label, w, active]) => (
          <TmTab key={label} $w={w} $active={active}>{label}</TmTab>
        ))}
      </TmTabs>
      <HeaderRow>
        <HeaderCell $align="flex-start" />
        <HeaderCell $align="flex-start">St...</HeaderCell>
        {HEAD_COLS.map(([pct, label]) => (
          <HeaderCell key={label}>
            {label === 'Memory' && (
              <SortMark><ChevronDown size={14} strokeWidth={1.6} /></SortMark>
            )}
            <BigPercent>{pct}</BigPercent>
            {label}
          </HeaderCell>
        ))}
        <LastHeaderCell $align="flex-start">GPU engine</LastHeaderCell>
      </HeaderRow>
      <TableArea>
        <Rows>
          {PROCS.map((p, i) => (
            <ProcessRow key={i}>
              <NameCell>
                <Expander>{p.expand && <ChevronRight size={16} strokeWidth={1.4} />}</Expander>
                {p.icon && <ProcIcon kind={p.icon} />}
                {p.name && <ProcessName>{p.name}</ProcessName>}
              </NameCell>
              <EmptyCell />
              <HeatCell $bg={p.cpuBg || HEAT}>{p.cpu}</HeatCell>
              <HeatCell $bg={p.memBg || HEAT}>{p.mem}</HeatCell>
              <HeatCell $bg={p.diskBg || HEAT}>{p.gpu && '0 MB/s'}</HeatCell>
              <HeatCell $bg={HEAT}>{p.gpu && '0 Mbps'}</HeatCell>
              <HeatCell $bg={p.gpuBg || HEAT}>{p.gpu}</HeatCell>
              <EngineCell>{p.engine}</EngineCell>
            </ProcessRow>
          ))}
        </Rows>
        <VScroll>
          <VThumb />
          <ArrowBox><ChevronUp size={14} strokeWidth={2} /></ArrowBox>
          <ArrowBox><ChevronDown size={14} strokeWidth={2} /></ArrowBox>
        </VScroll>
      </TableArea>
      <HScroll>
        <Slot $w={22}><ChevronLeft size={14} strokeWidth={2} /></Slot>
        <HThumb />
        <HTrack />
        <Slot $w={22}><ChevronRight size={14} strokeWidth={2} /></Slot>
      </HScroll>
      <TmFooter>
        <FewerDetails>
          <FewerCircle><ChevronUp size={14} strokeWidth={1.4} /></FewerCircle>
          Fewer details
        </FewerDetails>
        <EndTask>End task</EndTask>
      </TmFooter>
    </TaskManagerWindow>
  )
}

function ConsoleHost() {
  return (
    <ConsoleWindow>
      <ConsoleTitle>
        <Caption color="#8a8a8a" />
      </ConsoleTitle>
      <ConsoleBody>
        <ConsoleText>{`-3.01992e-07  0  1
0.5  1  -3.01992e-07
3.5  1  -3.01992e-07
0  1  0.73`}</ConsoleText>
        <ConsoleScroll>
          <ChevronUp size={14} />
          <ConsoleThumb />
          <ChevronDown size={14} />
        </ConsoleScroll>
      </ConsoleBody>
    </ConsoleWindow>
  )
}

function LearnOpenGL() {
  return (
    <GlWindow>
      <GlTitle>
        <GlIcon />
        <TitleText>LearnOpenGL</TitleText>
        <Caption color="#ffffff" />
      </GlTitle>
      <GlScene />
    </GlWindow>
  )
}

const BAR = '#76b9ed'

function WindowsTaskbar() {
  return (
    <Taskbar>
      <StartButton><WinLogo /></StartButton>
      <TaskSearch>
        <ScreenSearch />
        Type here to search
      </TaskSearch>
      <TaskButton $w={62}><CortanaIcon /></TaskButton>
      <TaskButton $w={62}><TaskViewIcon /></TaskButton>
      <TaskButton><EdgeIcon /></TaskButton>
      <TaskButton $bar={BAR}><ExplorerIcon /></TaskButton>
      <TaskButton><MailIcon /></TaskButton>
      <TaskButton><StoreIcon /></TaskButton>
      <TaskButton><BoltIcon /></TaskButton>
      <TaskButton><PcIcon /></TaskButton>
      <TaskButton><DevIcon /></TaskButton>
      <TaskButton $bar={BAR}><ChromeIcon /></TaskButton>
      <TaskButton $bar={BAR}><TmIcon s={34} /></TaskButton>
      <TaskButton $hl $bar="#4ed94e"><InstallerIcon /></TaskButton>
      <TaskButton $bar={BAR}><VsTaskIcon /></TaskButton>
      <TaskButton $bar={BAR}><ConsoleIcon /></TaskButton>
      <WideBar $hl $bar={BAR}><GlIcon s={34} /></WideBar>
      <TaskButton><HelpIcon /></TaskButton>
      <Tray $w={20} />
      <Tray $w={36}><NewsIcon /></Tray>
      <WeatherText $w={54}>34°C</WeatherText>
      <Tray $w={32}><ChevronUp size={24} strokeWidth={1.4} /></Tray>
      <Tray $w={30}><MeetIcon /></Tray>
      <Tray $w={30}><WifiIcon /></Tray>
      <Tray $w={30}><BatteryIcon /></Tray>
      <Tray $w={28}><VolumeIcon /></Tray>
      <Tray $w={42}><PenIcon /></Tray>
      <LangText $w={44}>ENG</LangText>
      <Clock>
        <span>10:01</span>
        <span>11-10-2021</span>
      </Clock>
      <TaskButton $w={60}>
        <NotifyIcon />
        <NotifyBadge>6</NotifyBadge>
      </TaskButton>
    </Taskbar>
  )
}

export default function App() {
  return (
    <Desktop>
      <GlobalStyle />
      <WorkArea>
        <VisualStudio />
        <TaskManager />
        <ConsoleHost />
        <LearnOpenGL />
      </WorkArea>
      <WindowsTaskbar />
    </Desktop>
  )
}
